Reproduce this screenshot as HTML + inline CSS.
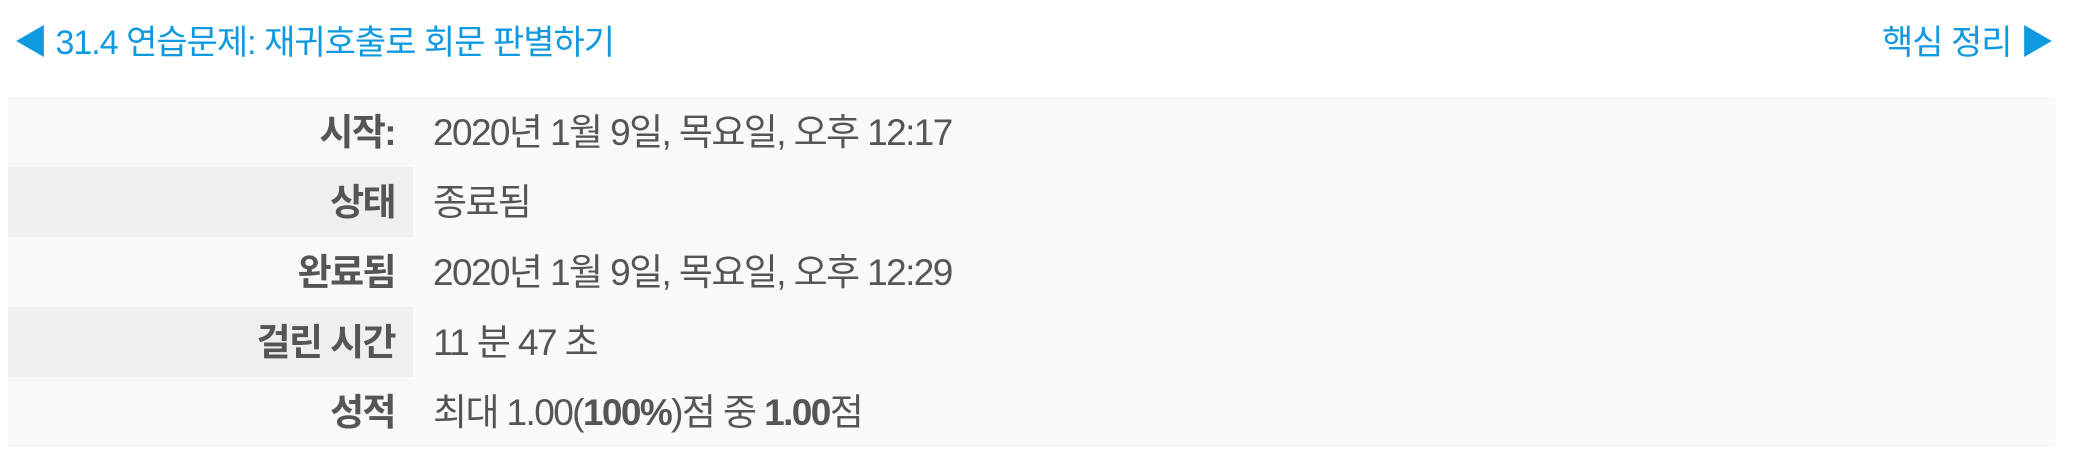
<!DOCTYPE html>
<html><head><meta charset="utf-8"><style>
body{margin:0;width:2081px;height:471px;background:#fff;font-family:"Liberation Sans","Noto Sans CJK KR",sans-serif;overflow:hidden;position:relative}
.nav{position:absolute;top:21px;font-size:34px;color:#0f9ae0;letter-spacing:-1px;line-height:44px;white-space:nowrap}
.l{left:14px}.r{right:28px}
table{position:absolute;left:8px;top:97px;width:2047px;border-collapse:collapse;font-size:37px;color:#555;letter-spacing:-1.6px}
td,th{height:70px;box-sizing:border-box;padding-bottom:8px}
td{background:#f9f9f9;white-space:nowrap;padding-left:20px}
th{width:405px;text-align:right;padding-right:18px;font-weight:bold;background:#f8f8f8}
tr.e th{background:#efefef}
</style></head><body>
<div class="nav l">◀ 31.4 연습문제: 재귀호출로 회문 판별하기</div>
<div class="nav r">핵심 정리 ▶</div>
<table>
<tr><th>시작:</th><td>2020년 1월 9일, 목요일, 오후 12:17</td></tr>
<tr class="e"><th>상태</th><td>종료됨</td></tr>
<tr><th>완료됨</th><td>2020년 1월 9일, 목요일, 오후 12:29</td></tr>
<tr class="e"><th>걸린 시간</th><td>11 분 47 초</td></tr>
<tr><th>성적</th><td>최대 1.00(<b>100%</b>)점 중 <b>1.00</b>점</td></tr>
</table>
</body></html>
